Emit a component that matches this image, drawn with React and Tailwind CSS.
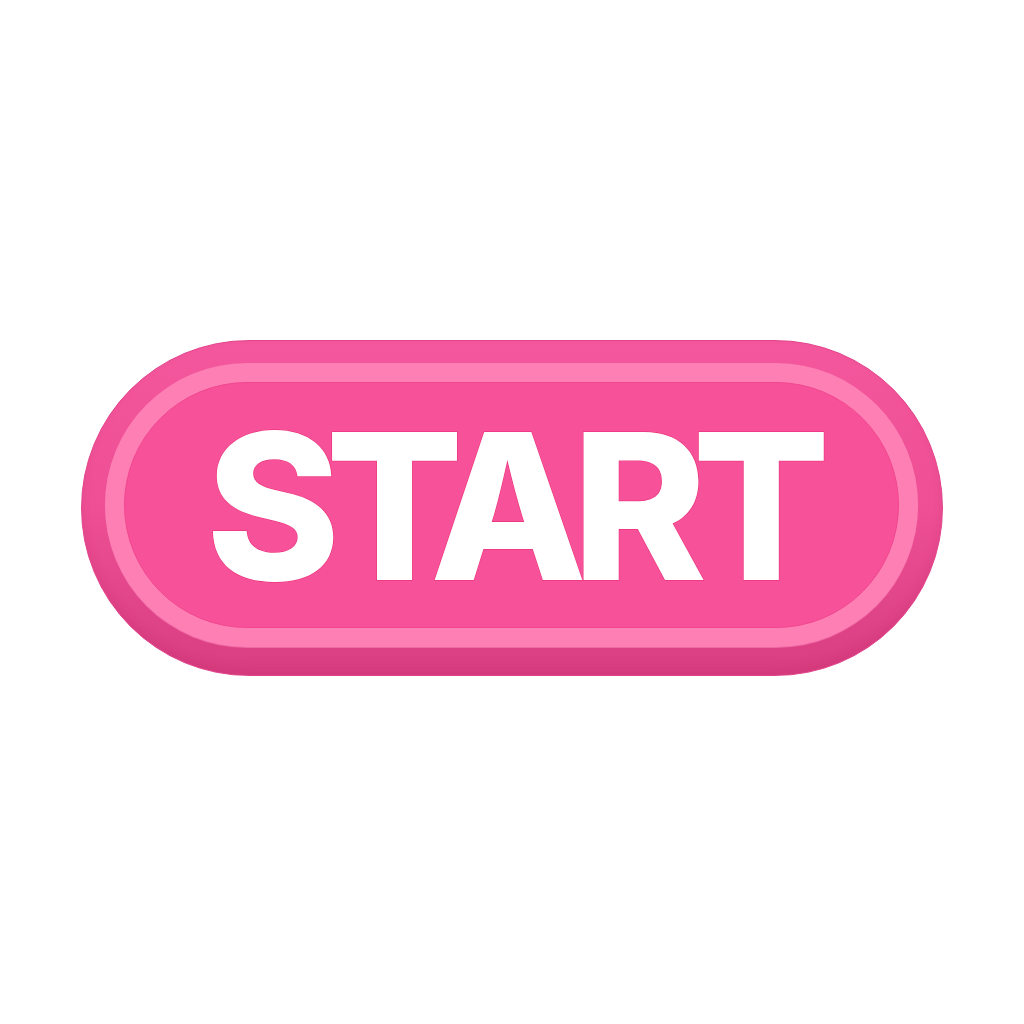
export default function App() {
  return (
    <div className="flex h-[1024px] w-full items-start justify-center bg-white pt-[340px]">
      {/* Outer body — darker toward the bottom for the raised look */}
      <div className="h-[336px] w-[862px] rounded-full border border-[#e2428a] bg-gradient-to-b from-[#f4579d] via-[#ee4f95] to-[#d83e81] pb-[28px] pl-[23px] pr-[24px] pt-[22px] shadow-[inset_0_-6px_10px_rgba(180,30,90,0.15)]">
        {/* Light ring */}
        <div className="h-full w-full rounded-full bg-[#fd7fb4] p-[19px] shadow-[0_1px_0_#f06aa5]">
          {/* Face */}
          <div className="flex h-full w-full items-center justify-center rounded-full border border-[#f2478f] bg-[#f7519a]">
            <span
              className="mt-[2px] mr-[2px] select-none text-[204px] font-extrabold leading-none tracking-[-15px] text-white [-webkit-text-stroke:1px_#e8286f] [paint-order:stroke_fill]"
              style={{ fontFamily: 'Inter, "Noto Sans", sans-serif' }}
            >
              START
            </span>
          </div>
        </div>
      </div>
    </div>
  )
}
